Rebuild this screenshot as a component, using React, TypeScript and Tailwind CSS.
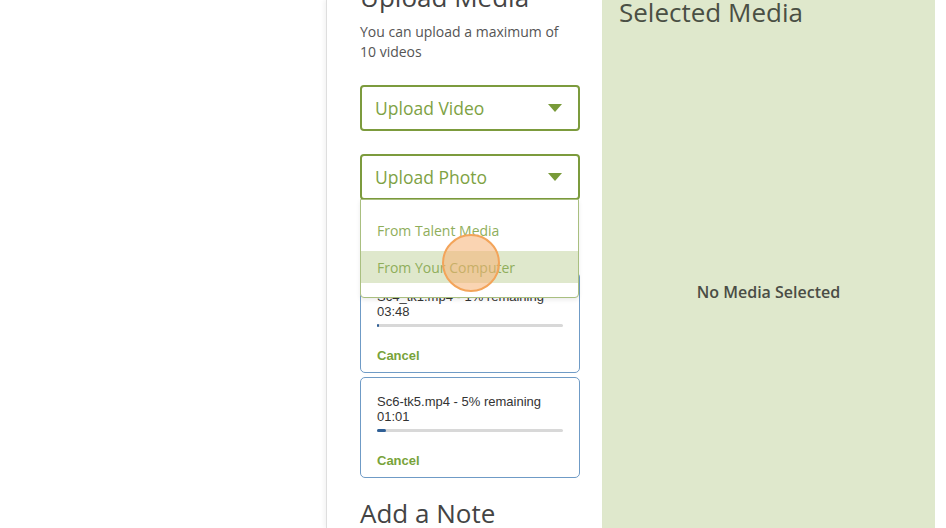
const uploads = [
  { name: "Sc4_tk1.mp4", pct: 1, time: "03:48" },
  { name: "Sc6-tk5.mp4", pct: 5, time: "01:01" },
];

const Caret = () => (
  <svg width="14" height="8" viewBox="0 0 14 8" className="shrink-0">
    <path d="M0 0 L14 0 L7 8 Z" fill="#789a38" />
  </svg>
);

const SelectBox = ({ label }: { label: string }) => (
  <div className="flex h-[46px] items-center justify-between rounded-[4px] border-2 border-[#7c9b3d] bg-white pl-[13px] pr-[16px]">
    <span className="text-[17.5px] text-[#7ea244]">{label}</span>
    <Caret />
  </div>
);

const UploadCard = ({ name, pct, time }: { name: string; pct: number; time: string }) => (
  <div className="h-[101px] rounded-[5px] border border-[#6f9bc6] bg-white px-4 pt-[16px] font-['Liberation_Sans',Arial,sans-serif]">
    <p className="text-[13px] leading-[15px] text-[#333]">
      {name} - {pct}% remaining
      <br />
      {time}
    </p>
    <div className="mt-[5px] h-[3px] w-full rounded-full bg-[#d8d8d8]">
      <div
        className="h-[3px] rounded-full bg-[#2f5f96]"
        style={{ width: `${Math.max(pct, 1.2)}%` }}
      />
    </div>
    <button className="mt-[21px] text-[13px] font-bold leading-[15px] text-[#78a33a]">Cancel</button>
  </div>
);

export default function App() {
  return (
    <div className="flex h-[528px] w-[946px] overflow-hidden bg-white font-['Open_Sans','Noto_Sans',sans-serif]">
      <div className="w-[326px] shrink-0" />

      {/* upload column */}
      <div className="relative w-[276px] shrink-0 border-l border-[#dedede] bg-white pl-[33px] pr-[22px] shadow-[-2px_0_4px_rgba(0,0,0,0.05)]">
        <h2 className="mt-[-20px] text-[26px] leading-[34px] text-[#444]">Upload Media</h2>
        <p className="mt-[8px] text-[14px] leading-[20px] text-[#555]">
          You can upload a maximum of
          <br />
          10 videos
        </p>

        <div className="mt-[23px]">
          <SelectBox label="Upload Video" />
        </div>

        <div className="relative mt-[23px]">
          <SelectBox label="Upload Photo" />

          {/* open menu */}
          <div className="absolute left-0 top-[45px] z-10 h-[99px] w-[219px] rounded-b-[4px] border border-[#a9bf80] bg-white pt-[14px] shadow-[0_2px_4px_rgba(0,0,0,0.08)]">
            <div className="flex h-[32px] items-center px-4 text-[14px] text-[#8fae5b]">From Talent Media</div>
            <div className="mt-[5px] flex h-[32px] items-center bg-[#dfe8cc] px-4 text-[14px] text-[#8fae5b]">
              From Your Computer
            </div>
          </div>

          {/* click marker */}
          <div className="absolute left-[82px] top-[80px] z-20 h-[58px] w-[58px] rounded-full border-2 border-[#f3a45a] bg-[#f6b072]/55" />
        </div>

        <div className="mt-[72px] flex flex-col gap-[4px]">
          {uploads.map((u) => (
            <UploadCard key={u.name} {...u} />
          ))}
        </div>

        <h2 className="mt-[18px] text-[26px] leading-[34px] text-[#444]">Add a Note</h2>
      </div>

      {/* selected media */}
      <div className="flex w-[333px] shrink-0 flex-col bg-[#dfe8cc] pl-[17px]">
        <h2 className="mt-[-5px] text-[26px] leading-[34px] text-[#4a4f44]">Selected Media</h2>
        <div className="flex flex-1 items-center justify-center pr-[17px] pt-[27px]">
          <span className="text-[16px] font-semibold text-[#4a4d45]">No Media Selected</span>
        </div>
      </div>

      <div className="flex-1" />
    </div>
  );
}
